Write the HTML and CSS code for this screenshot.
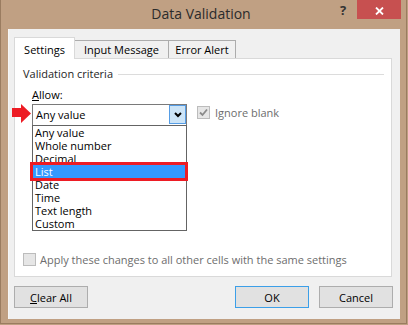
FILE: index.html
```html
<!DOCTYPE html>
<html>
<head>
<meta charset="utf-8">
<link rel="stylesheet" href="styles.css">
</head>
<body>
<div class="window">
  <div class="titlebar">
    <span></span>
    <span class="title">Data Validation</span>
    <div class="controls">
      <span class="help">?</span>
      <span class="close"><svg width="9" height="8" viewBox="0 0 9 8"><path d="M1 0.5 L8 7.5 M8 0.5 L1 7.5" stroke="#fff" stroke-width="1.8"/></svg></span>
    </div>
  </div>
  <div class="client">
    <div class="tabs">
      <div class="tab active">Settings</div>
      <div class="tab t-input">Input Message</div>
      <div class="tab t-error">Error Alert</div>
    </div>
    <div class="panel">
      <div class="group-head"><span>Validation criteria</span><span class="rule"></span></div>
      <div class="group-body">
        <div class="label"><u>A</u>llow:</div>
        <div class="row">
          <div class="combo-wrap">
            <div class="combo">
              <span class="combo-text">Any value</span>
              <span class="combo-btn"><svg width="8" height="6" viewBox="0 0 8 6"><path d="M1 1 L4 4 L7 1" fill="none" stroke="#000" stroke-width="2"/></svg></span>
            </div>
            <ul class="list">
              <li>Any value</li>
              <li>Whole number</li>
              <li>Decimal</li>
              <li class="sel">List</li>
              <li>Date</li>
              <li>Time</li>
              <li>Text length</li>
              <li>Custom</li>
            </ul>
          </div>
          <div class="check-item ignore">
            <span class="box"><svg width="11" height="11" viewBox="0 0 11 11"><path d="M2 5.5 L4.5 8 L9 2.5" fill="none" stroke="#8a8a8a" stroke-width="1.8"/></svg></span>
            <span class="dis">Ignore blank</span>
          </div>
        </div>
      </div>
      <div class="check-item apply">
        <span class="box"></span>
        <span class="dis">Apply these changes to all other cells with the same settings</span>
      </div>
    </div>
    <div class="buttons">
      <button class="btn"><u>C</u>lear All</button>
      <span class="spacer"></span>
      <button class="btn ok">OK</button>
      <button class="btn">Cancel</button>
    </div>
  </div>
  <svg class="arrow" width="22" height="19" viewBox="0 0 22 19"><polygon points="0,4 9,4 9,0 19,9.5 9,19 9,13 0,13" fill="#ed1c24"/></svg>
</div>
</body>
</html>
```
FILE: styles.css
```css
* { box-sizing: border-box; }
html, body { margin: 0; padding: 0; }
body {
  background: #bf9f82;
  font-family: "Open Sans", "Noto Sans", sans-serif;
  font-size: 11px;
  color: #000;
}
.window {
  position: relative;
  width: 407px;
  height: 324px;
  border: 1px solid #9a7c60;
  border-top: none;
  background: #c0a083;
}
.titlebar {
  height: 29px;
  display: grid;
  grid-template-columns: 1fr auto 1fr;
  padding-right: 5px;
}
.title {
  font-size: 14px;
  line-height: 28px;
  color: #2b2b2b;
}
.controls {
  display: flex;
  justify-content: flex-end;
  align-items: flex-start;
}
.help {
  width: 14px;
  margin-right: 7px;
  text-align: center;
  font-weight: bold;
  font-size: 13px;
  line-height: 21px;
  color: #333;
}
.close {
  width: 44px;
  height: 19px;
  background: #c75050;
  display: flex;
  align-items: center;
  justify-content: center;
  padding-top: 2px;
}
.client {
  margin-left: 7px;
  width: 392px;
  height: 290px;
  background: #f0f0f0;
  border-left: 1px solid #f7f7f7;
  padding: 8px 7px 0 5px;
  display: flex;
  flex-direction: column;
}
.tabs {
  display: flex;
  align-items: flex-end;
  height: 21px;
  position: relative;
  z-index: 1;
}
.tab {
  height: 18px;
  border: 1px solid #acacac;
  border-bottom: none;
  background: #f0f0f0;
  text-align: center;
  line-height: 17px;
  white-space: nowrap;
}
.tab.active {
  height: 22px;
  margin-bottom: -1px;
  width: 61px;
  background: #fff;
  border-color: #d9d9d9;
  line-height: 23px;
}
.t-input { width: 94px; border-left: none; }
.t-error { width: 68px; margin-left: -1px; }
.panel {
  height: 219px;
  margin-right: 1px;
  background: #fff;
  border: 1px solid #d9d9d9;
  padding: 7px 6px 9px 8px;
  display: flex;
  flex-direction: column;
}
.group-head {
  display: flex;
  align-items: center;
  line-height: 16px;
  color: #1e1e1e;
}
.rule {
  flex: 1;
  height: 1px;
  background: #dcdcdc;
  margin-left: 5px;
  margin-right: 1px;
}
.group-body {
  padding-left: 9px;
  margin-top: 5px;
}
.label { line-height: 16px; }
.row {
  display: flex;
  align-items: flex-start;
  margin-top: 1px;
}
.combo-wrap {
  position: relative;
  width: 155px;
  height: 22px;
}
.combo {
  height: 22px;
  border: 1px solid #7a7a7a;
  background: #fff;
  display: flex;
  align-items: stretch;
}
.combo-text {
  flex: 1;
  padding-left: 3px;
  line-height: 20px;
}
.combo-btn {
  width: 17px;
  margin: 0 0 1px 0;
  background: #cce4f7;
  border: 1px solid #569de5;
  display: flex;
  align-items: center;
  justify-content: center;
}
.list {
  position: absolute;
  top: 21px;
  left: 0;
  width: 155px;
  margin: 0;
  padding: 0;
  list-style: none;
  background: #fff;
  border: 1px solid #646464;
  z-index: 2;
}
.list li {
  height: 13px;
  line-height: 13px;
  padding-left: 2px;
  white-space: nowrap;
}
.list li.sel {
  background: #3399ff;
  color: #fff;
  outline: 3px solid #ed1c24;
  margin-right: 1px;
}
.check-item {
  display: flex;
  align-items: center;
  white-space: nowrap;
}
.ignore {
  margin-left: 10px;
  margin-top: 1px;
  height: 14px;
}
.box {
  width: 13px;
  height: 13px;
  border: 1px solid #bcbcbc;
  background: #e6e6e6;
  display: flex;
  align-items: center;
  justify-content: center;
  margin-right: 5px;
}
.dis { color: #6d6d6d; }
.apply {
  margin-top: auto;
}
.apply .box { margin-right: 4px; }
.buttons {
  display: flex;
  margin-top: 9px;
  margin-left: 0;
}
.spacer { flex: 1; }
.btn {
  width: 74px;
  height: 22px;
  font-family: inherit;
  font-size: 11px;
  color: #000;
  background: #e1e1e1;
  border: 1px solid #adadad;
  padding: 0;
  margin: 0;
}
.btn.ok {
  border-color: #3c9fe8;
  margin-right: 10px;
}
.arrow {
  position: absolute;
  left: 11px;
  top: 104px;
}
```
